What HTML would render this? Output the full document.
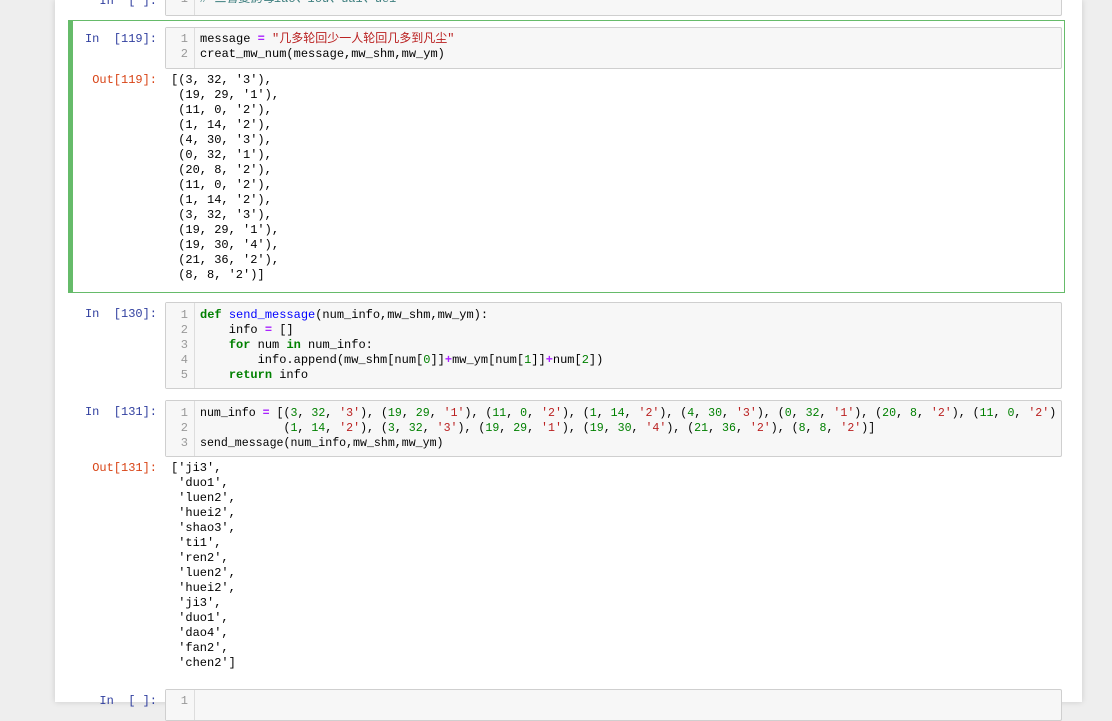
<!DOCTYPE html>
<html><head><meta charset="utf-8"><style>
body{margin:0;width:1112px;height:702px;background:#eeeeee;overflow:hidden;position:relative;font-family:"Liberation Mono","Noto Sans CJK SC",monospace;font-size:12px;}
.page{position:absolute;left:55px;top:0;width:1027px;height:702px;background:#fff;box-shadow:0 0 6px rgba(0,0,0,.15);}
.box{position:absolute;left:165px;width:895px;background:#f7f7f7;border:1px solid #cfcfcf;border-radius:2px;}
.gut{position:absolute;left:0;top:0;bottom:0;width:28px;border-right:1px solid #ddd;background:#f7f7f7;}
.ln{position:absolute;left:0;width:22px;text-align:right;color:#999;line-height:15px;}
.code{position:absolute;left:34px;white-space:pre;line-height:15px;color:#000;}
.pin{position:absolute;width:157px;text-align:right;color:#303f9f;line-height:15px;left:0;}
.pout{position:absolute;width:157px;text-align:right;color:#d84315;line-height:15px;left:0;}
.out{position:absolute;left:171px;white-space:pre;line-height:15px;}
.k{color:#008000;font-weight:bold}.f{color:#0000ff}.o{color:#aa22ff;font-weight:bold}.s{color:#ba2121}.n{color:#008000}.c{color:#408080;font-style:italic}
.sel{position:absolute;left:68px;top:20px;width:997px;height:273px;border:1px solid #66bb6a;border-left:5px solid #66bb6a;box-sizing:border-box;}
</style></head><body>
<div class="page"></div>
<div class="pin" style="top:-6px">In&nbsp;&nbsp;[&nbsp;]:</div>
<div class="box" style="top:-8px;height:22px"><div class="gut"></div><div class="ln" style="top:-1px">1</div><div class="code c" style="top:-1px"># 三音复韵母iao、iou、uai、uei</div></div>

<div class="sel"></div>
<div class="pin" style="top:32px">In&nbsp;&nbsp;[119]:</div>
<div class="box" style="top:27px;height:40px"><div class="gut"></div><div class="ln" style="top:4px">1<br>2</div><div class="code" style="top:4px">message <span class="o">=</span> <span class="s">"几多轮回少一人轮回几多到凡尘"</span>
creat_mw_num(message,mw_shm,mw_ym)</div></div>
<div class="pout" style="top:73px">Out[119]:</div>
<div class="out" style="top:73px">[(3, 32, '3'),
 (19, 29, '1'),
 (11, 0, '2'),
 (1, 14, '2'),
 (4, 30, '3'),
 (0, 32, '1'),
 (20, 8, '2'),
 (11, 0, '2'),
 (1, 14, '2'),
 (3, 32, '3'),
 (19, 29, '1'),
 (19, 30, '4'),
 (21, 36, '2'),
 (8, 8, '2')]</div>

<div class="pin" style="top:307px">In&nbsp;&nbsp;[130]:</div>
<div class="box" style="top:302px;height:85px"><div class="gut"></div><div class="ln" style="top:5px">1<br>2<br>3<br>4<br>5</div><div class="code" style="top:5px"><span class="k">def</span> <span class="f">send_message</span>(num_info,mw_shm,mw_ym):
    info <span class="o">=</span> []
    <span class="k">for</span> num <span class="k">in</span> num_info:
        info.append(mw_shm[num[<span class="n">0</span>]]<span class="o">+</span>mw_ym[num[<span class="n">1</span>]]<span class="o">+</span>num[<span class="n">2</span>])
    <span class="k">return</span> info</div></div>

<div class="pin" style="top:405px">In&nbsp;&nbsp;[131]:</div>
<div class="box" style="top:400px;height:55px"><div class="gut"></div><div class="ln" style="top:5px">1<br>2<br>3</div><div class="code" style="top:5px;font-size:11.6px">num_info <span class="o">=</span> [(<span class="n">3</span>, <span class="n">32</span>, <span class="s">'3'</span>), (<span class="n">19</span>, <span class="n">29</span>, <span class="s">'1'</span>), (<span class="n">11</span>, <span class="n">0</span>, <span class="s">'2'</span>), (<span class="n">1</span>, <span class="n">14</span>, <span class="s">'2'</span>), (<span class="n">4</span>, <span class="n">30</span>, <span class="s">'3'</span>), (<span class="n">0</span>, <span class="n">32</span>, <span class="s">'1'</span>), (<span class="n">20</span>, <span class="n">8</span>, <span class="s">'2'</span>), (<span class="n">11</span>, <span class="n">0</span>, <span class="s">'2'</span>)
            (<span class="n">1</span>, <span class="n">14</span>, <span class="s">'2'</span>), (<span class="n">3</span>, <span class="n">32</span>, <span class="s">'3'</span>), (<span class="n">19</span>, <span class="n">29</span>, <span class="s">'1'</span>), (<span class="n">19</span>, <span class="n">30</span>, <span class="s">'4'</span>), (<span class="n">21</span>, <span class="n">36</span>, <span class="s">'2'</span>), (<span class="n">8</span>, <span class="n">8</span>, <span class="s">'2'</span>)]
send_message(num_info,mw_shm,mw_ym)</div></div>
<div class="pout" style="top:461px">Out[131]:</div>
<div class="out" style="top:461px">['ji3',
 'duo1',
 'luen2',
 'huei2',
 'shao3',
 'ti1',
 'ren2',
 'luen2',
 'huei2',
 'ji3',
 'duo1',
 'dao4',
 'fan2',
 'chen2']</div>

<div class="pin" style="top:694px">In&nbsp;&nbsp;[&nbsp;]:</div>
<div class="box" style="top:689px;height:30px"><div class="gut"></div><div class="ln" style="top:4px">1</div></div>
</body></html>
